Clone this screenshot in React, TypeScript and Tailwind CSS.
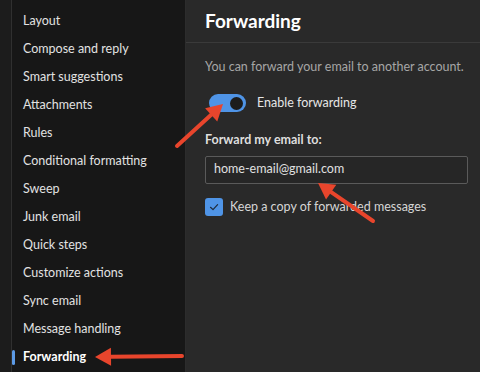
import React from 'react';

const items = [
  'Layout',
  'Compose and reply',
  'Smart suggestions',
  'Attachments',
  'Rules',
  'Conditional formatting',
  'Sweep',
  'Junk email',
  'Quick steps',
  'Customize actions',
  'Sync email',
  'Message handling',
  'Forwarding',
];

function Arrow({ x1, y1, x2, y2 }: { x1: number; y1: number; x2: number; y2: number }) {
  // arrow head at (x2, y2)
  const a = Math.atan2(y2 - y1, x2 - x1);
  const len = 16;
  const w = 9;
  const bx = x2 - Math.cos(a) * len;
  const by = y2 - Math.sin(a) * len;
  const px = -Math.sin(a) * w;
  const py = Math.cos(a) * w;
  return (
    <g>
      <line x1={x1} y1={y1} x2={bx} y2={by} stroke="#e8452c" strokeWidth={4} strokeLinecap="round" />
      <polygon points={`${x2},${y2} ${bx + px},${by + py} ${bx - px},${by - py}`} fill="#e8452c" />
    </g>
  );
}

export default function App() {
  return (
    <div
      className="relative w-[480px] h-[372px] flex overflow-hidden text-[12.5px] text-[#e6e6e6]"
      style={{ fontFamily: 'Lato, "Noto Sans", sans-serif' }}
    >
      <div className="w-[12px] shrink-0 bg-[#1c1c1c] border-r border-[#303030]" />
      <div className="w-[174px] shrink-0 bg-[#171717] border-r border-[#2c2c2c] pt-[7px]">
        {items.map((it) => {
          const active = it === 'Forwarding';
          return (
            <div key={it} className="relative h-[28px] flex items-center pl-[11px]">
              {active && (
                <span className="absolute left-0 top-[7px] w-[3px] h-[15px] rounded-full bg-[#5c9ae6]" />
              )}
              <span className={active ? 'font-bold text-white' : 'text-[#e2e2e2]'}>{it}</span>
            </div>
          );
        })}
      </div>
      <div className="flex-1 min-w-0 bg-[#292929] flex flex-col">
        <div className="h-[43px] border-b border-[#3a3a3a] flex items-center pl-[19px]">
          <h1 className="text-[19px] font-bold text-white">Forwarding</h1>
        </div>
        <div className="pl-[19px] pr-[12px] pt-[14px] flex flex-col">
          <p className="text-[#a6a6a6] h-[20px] leading-[20px] whitespace-nowrap">
            You can forward your email to another account.
          </p>
          <div className="flex items-center gap-[11px] mt-[17px] pl-[4px]">
            <div className="w-[37px] h-[18px] rounded-full bg-[#4f94e6] flex items-center justify-end pr-[3px]">
              <div className="w-[13px] h-[13px] rounded-full bg-[#1c1c1c]" />
            </div>
            <span className="text-[#e6e6e6]">Enable forwarding</span>
          </div>
          <div className="mt-[18px] font-bold text-[#dedede]">Forward my email to:</div>
          <div className="mt-[6px] h-[28px] border border-[#5a5a5a] rounded-[2px] bg-[#262626] flex items-center pl-[8px] text-[#e0e0e0]">
            home-email@gmail.com
          </div>
          <div className="flex items-center gap-[7px] mt-[14px]">
            <div className="w-[18px] h-[18px] rounded-[3px] bg-[#4f94e6] flex items-center justify-center">
              <svg width="12" height="12" viewBox="0 0 12 12" fill="none">
                <path d="M2.5 6.3 L5 8.6 L9.6 3.6" stroke="#1e2a3a" strokeWidth="1.2" strokeLinecap="round" strokeLinejoin="round" />
              </svg>
            </div>
            <span className="text-[#d6d6d6]">Keep a copy of forwarded messages</span>
          </div>
        </div>
      </div>
      <svg className="absolute inset-0 pointer-events-none" width="480" height="372" viewBox="0 0 480 372">
        <Arrow x1={177} y1={146} x2={223} y2={104} />
        <Arrow x1={373} y1={221} x2={318} y2={183} />
        <Arrow x1={182} y1={356} x2={95} y2={357} />
      </svg>
    </div>
  );
}
